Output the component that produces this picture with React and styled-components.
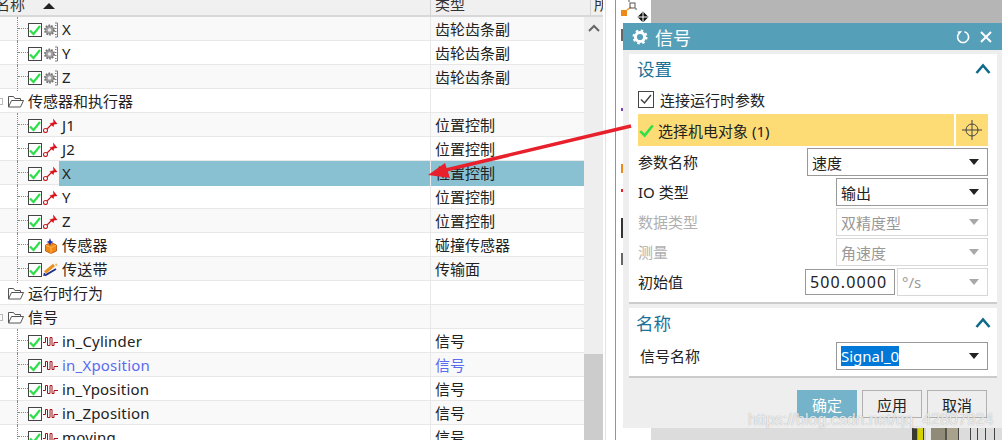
import styled, { createGlobalStyle } from "styled-components";

const GlobalStyle = createGlobalStyle`
  html, body {
    margin: 0;
    padding: 0;
    background: #fff;
  }
  body {
    font-family: "Noto Sans", "Noto Sans CJK SC", sans-serif;
    font-size: 15px;
    color: #222;
  }
`;

const rows = [
  { name: "X", type: "齿轮齿条副", icon: "gear" },
  { name: "Y", type: "齿轮齿条副", icon: "gear" },
  { name: "Z", type: "齿轮齿条副", icon: "gear" },
  { name: "传感器和执行器", folder: true },
  { name: "J1", type: "位置控制", icon: "joint" },
  { name: "J2", type: "位置控制", icon: "joint" },
  { name: "X", type: "位置控制", icon: "joint", selected: true },
  { name: "Y", type: "位置控制", icon: "joint" },
  { name: "Z", type: "位置控制", icon: "joint" },
  { name: "传感器", type: "碰撞传感器", icon: "sensor" },
  { name: "传送带", type: "传输面", icon: "belt" },
  { name: "运行时行为", folder: true, noBox: true },
  { name: "信号", folder: true },
  { name: "in_Cylinder", type: "信号", icon: "signal" },
  { name: "in_Xposition", type: "信号", icon: "signal", link: true },
  { name: "in_Yposition", type: "信号", icon: "signal" },
  { name: "in_Zposition", type: "信号", icon: "signal" },
  { name: "moving", type: "信号", icon: "signal" },
];

const machineParts = [
  [5, "#3a3a30"], [1, "#9a9a90"], [5, "#d6d200"], [1, "#3a3a30"], [2, "#cfcfcf"],
  [5, "#e8e8e8"], [14, "#8f8b78"], [2, "#55554a"], [11, "#a8a28c"], [1, "#444"],
  [11, "#dcdcdc"], [1, "#444"], [6, "#dcdcdc"], [1, "#444"], [7, "#dcdcdc"],
  [1, "#444"], [8, "#dcdcdc"], [1, "#444"],
];

function GearIcon() {
  return (
    <svg width="14" height="16" viewBox="0 0 14 16">
      <circle cx="5.500" cy="8" r="4.500" fill="#a0a0a0" stroke="#767676" strokeWidth="2" strokeDasharray="1.600 1.200" />
      <circle cx="5.500" cy="8" r="1.800" fill="#ececec" />
      <path d="M11 1H13.500V15H11M11 3.500h1.500M11 6.500h1.500M11 9.500h1.500M11 12.500h1.500" fill="none" stroke="#7a7a7a" strokeWidth="1" />
    </svg>
  );
}

function JointIcon() {
  return (
    <svg width="15" height="15" viewBox="0 0 15 15">
      <circle cx="2.500" cy="12.500" r="2" fill="#fff" stroke="#c8141c" strokeWidth="1.100" />
      <path d="M4 11L10 5" stroke="#c8141c" strokeWidth="1.100" />
      <path d="M6.500 5.500L10.500 4.500L10 0.500L14.500 6L11 6.500L10.500 9Z" fill="#d8141c" />
    </svg>
  );
}

function SensorIcon() {
  return (
    <svg width="14" height="16" viewBox="0 0 14 16">
      <path d="M1.500 7L7 4.500L12.500 7V13L7 15.500L1.500 13Z" fill="#f08a14" stroke="#b9480c" strokeWidth="0.800" />
      <path d="M1.500 7L7 9.500L12.500 7M7 9.500V15.500" fill="none" stroke="#ffc060" strokeWidth="0.800" />
      <path d="M6 0L7 3L9.500 4L7 5L6 8L5 5L2.500 4L5 3Z" fill="#1a2fa8" />
    </svg>
  );
}

function BeltIcon() {
  return (
    <svg width="15" height="15" viewBox="0 0 15 15">
      <path d="M2 10.500L11 3" stroke="#e89020" strokeWidth="3" />
      <path d="M12.500 2L14 3.500" stroke="#f2b860" strokeWidth="2" />
      <path d="M2 13.500L13 7" stroke="#23308c" strokeWidth="2" />
      <path d="M1.500 11L1 14" stroke="#23308c" strokeWidth="1.500" />
    </svg>
  );
}

function SignalIcon() {
  return (
    <svg width="15" height="13" viewBox="0 0 15 13">
      <path d="M0 7.500H2.500V2.500H4.500V10.500H7V2.500H9V10.500H11V7.500H15" fill="none" stroke="#a80f14" strokeWidth="1" />
    </svg>
  );
}

const rowIcons = {
  gear: GearIcon,
  joint: JointIcon,
  sensor: SensorIcon,
  belt: BeltIcon,
  signal: SignalIcon,
};

function FolderIcon() {
  return (
    <svg width="16" height="13" viewBox="0 0 16 13">
      <path d="M0.500 12V1.500H5.500L7 3.500H12.500V5.500M0.500 12H12.500L15.500 5.500H3.500L0.500 12Z" fill="#fff" stroke="#555" strokeWidth="1" />
    </svg>
  );
}

function Tick({ size = 12, color = "#2fe04a", weight = 2.200 }) {
  return (
    <svg width={size} height={size} viewBox="0 0 12 12">
      <path d="M1 6.500L4.500 10L11 2" fill="none" stroke={color} strokeWidth={weight} />
    </svg>
  );
}

function Chevron() {
  return (
    <svg width="16" height="11" viewBox="0 0 16 11">
      <path d="M1.500 10L8 2.500L14.500 10" fill="none" stroke="#0f6a8a" strokeWidth="2.600" />
    </svg>
  );
}

function TreeRow({ row }) {
  const Icon = rowIcons[row.icon];
  return (
    <Row>
      <NameCell>
        {row.folder ? (
          <>
            <Expander $plain={row.noBox} />
            <FolderSlot>
              <FolderIcon />
            </FolderSlot>
          </>
        ) : (
          <>
            <Guide />
            <CheckBox>
              <Tick />
            </CheckBox>
            <IconSlot>
              <Icon />
            </IconSlot>
          </>
        )}
        <Label $selected={row.selected} $link={row.link} $folder={row.folder}>
          {row.name}
        </Label>
      </NameCell>
      <TypeCell $selected={row.selected} $link={row.link}>
        {row.type}
      </TypeCell>
    </Row>
  );
}

function Select({ value, width, disabled, selected }) {
  return (
    <SelectBox $width={width} $disabled={disabled}>
      {selected ? <Highlighted>{value}</Highlighted> : <span>{value}</span>}
      <Caret $disabled={disabled} />
    </SelectBox>
  );
}

export default function App() {
  return (
    <Page>
      <GlobalStyle />
      <TreePanel>
        <HeaderRow>
          <HeaderName>
            <span>名称</span>
            <SortMark />
          </HeaderName>
          <HeaderType>类型</HeaderType>
          <HeaderExtra>所</HeaderExtra>
        </HeaderRow>
        <TreeBody>
          <TreeRows>
            {rows.map((row, i) => (
              <TreeRow key={i} row={row} />
            ))}
          </TreeRows>
          <ScrollBar>
            <ScrollUp>
              <svg width="12" height="8" viewBox="0 0 12 8">
                <path d="M1 7L6 2L11 7" fill="none" stroke="#666" strokeWidth="2" />
              </svg>
            </ScrollUp>
            <ScrollThumb />
          </ScrollBar>
        </TreeBody>
      </TreePanel>

      <Splitter />

      <Viewport>
        <Palette>
          <PaletteIcon>
            <svg width="30" height="22" viewBox="0 0 30 22">
              <rect x="0" y="10" width="6" height="6" fill="#ee8a1a" />
              <path d="M6 10L10 7" stroke="#ee8a1a" strokeWidth="1.200" />
              <rect x="9" y="3" width="5" height="5" fill="none" stroke="#555" strokeWidth="1" />
              <path d="M7 1h2M15 8v2" stroke="#555" strokeWidth="1" />
              <path d="M16.500 17L22 11.500L27.500 17L22 22.500Z" fill="#111" />
              <path d="M22 12V22M17 17H27" stroke="#fff" strokeWidth="1" />
            </svg>
          </PaletteIcon>
          <PaletteMark $top={5} $h={12} $c="#666" />
          <PaletteMark $top={67} $h={3} $c="#7a3fb0" />
          <PaletteMark $top={53} $h={9} $c="#ee8a1a" />
          <PaletteMark $top={16} $h={3} $c="#e8202c" />
          <PaletteMark $top={26} $h={20} $c="#333" />
          <PaletteMark $top={15} $h={12} $c="#666" />
        </Palette>
        <Scene>
          <SceneTop />
          <SceneBottom>
            <Machine>
              {machineParts.map(([w, c], i) => (
                <MachinePart key={i} $w={w} $c={c} />
              ))}
            </Machine>
          </SceneBottom>
        </Scene>
      </Viewport>

      <Dialog>
        <TitleBar>
          <TitleLeft>
            <svg width="16" height="16" viewBox="0 0 16 16">
              <circle cx="8" cy="8" r="4.600" fill="none" stroke="#fff" strokeWidth="3" />
              <circle cx="8" cy="8" r="6.500" fill="none" stroke="#fff" strokeWidth="2" strokeDasharray="2.500 2.600" />
            </svg>
            <TitleText>信号</TitleText>
          </TitleLeft>
          <TitleActions>
            <svg width="14" height="14" viewBox="0 0 14 14">
              <path d="M8.500 1.700A5.500 5.500 0 1 1 2.500 4" fill="none" stroke="#fff" strokeWidth="1.600" />
              <path d="M1.500 1.500L6 1L3 5Z" fill="#fff" />
            </svg>
            <svg width="14" height="14" viewBox="0 0 14 14">
              <path d="M2 2L12 12M12 2L2 12" fill="none" stroke="#fff" strokeWidth="2" />
            </svg>
          </TitleActions>
        </TitleBar>

        <DialogBody>
          <Section $height={250}>
            <SectionHead>
              <SectionTitle>设置</SectionTitle>
              <Chevron />
            </SectionHead>
            <CheckLine>
              <RuntimeCheck>
                <Tick size={12} color="#444" weight={1.500} />
              </RuntimeCheck>
              连接运行时参数
            </CheckLine>
            <PickLine>
              <PickMain>
                <Tick size={15} />
                选择机电对象 (1)
              </PickMain>
              <PickButton>
                <svg width="22" height="22" viewBox="0 0 22 22">
                  <circle cx="11" cy="11" r="6" fill="none" stroke="#444" strokeWidth="1" />
                  <path d="M11 1V21M1 11H21" stroke="#444" strokeWidth="1" />
                </svg>
              </PickButton>
            </PickLine>
            <FormRow>
              <FieldLabel>参数名称</FieldLabel>
              <Select value="速度" width={181} />
            </FormRow>
            <FormRow>
              <FieldLabel>IO 类型</FieldLabel>
              <Select value="输出" width={152} />
            </FormRow>
            <FormRow>
              <FieldLabel $disabled>数据类型</FieldLabel>
              <Select value="双精度型" width={152} disabled />
            </FormRow>
            <FormRow>
              <FieldLabel $disabled>测量</FieldLabel>
              <Select value="角速度" width={152} disabled />
            </FormRow>
            <FormRow>
              <FieldLabel>初始值</FieldLabel>
              <ValueGroup>
                <NumberBox>500.0000</NumberBox>
                <Select value="°/s" width={91} disabled />
              </ValueGroup>
            </FormRow>
          </Section>

          <Section $height={70}>
            <SectionHead $name>
              <SectionTitle>名称</SectionTitle>
              <Chevron />
            </SectionHead>
            <NameLine>
              <FieldLabel>信号名称</FieldLabel>
              <Select value="Signal_0" width={152} selected />
            </NameLine>
          </Section>

          <ButtonBar>
            <DialogButton $primary>确定</DialogButton>
            <DialogButton>应用</DialogButton>
            <DialogButton>取消</DialogButton>
          </ButtonBar>
        </DialogBody>
      </Dialog>

      <Watermark>https://blog.csdn.net/qq_42807924</Watermark>

      <ArrowLayer width="1002" height="440" viewBox="0 0 1002 440">
        <path d="M631 126L446 170" stroke="#e8202c" strokeWidth="3.600" />
        <path d="M428 175L445 163L450 178Z" fill="#e8202c" />
      </ArrowLayer>
    </Page>
  );
}

const Page = styled.div`
  position: relative;
  display: flex;
  width: 1002px;
  height: 440px;
  overflow: hidden;
`;

const TreePanel = styled.div`
  display: flex;
  flex-direction: column;
  width: 603px;
  flex: none;
`;

const HeaderRow = styled.div`
  display: grid;
  grid-template-columns: 430px 160px 13px;
  height: 17px;
  flex: none;
  background: #f0f0f0;
  border-bottom: 2px solid #d8d8d8;
  box-sizing: border-box;
  overflow: hidden;
  line-height: 20px;
`;

const HeaderName = styled.div`
  display: flex;
  margin: -6px 0 0 -5px;
  gap: 18px;
  color: #333;
`;

const SortMark = styled.i`
  width: 0;
  height: 0;
  margin-top: 9px;
  border-left: 6px solid transparent;
  border-right: 6px solid transparent;
  border-bottom: 6px solid #222;
`;

const HeaderType = styled.div`
  margin-top: -6px;
  padding-left: 4px;
  border-left: 1px solid #d4d4d4;
  color: #333;
  height: 30px;
`;

const HeaderExtra = styled(HeaderType)`
  padding-left: 3px;
  overflow: hidden;
`;

const TreeBody = styled.div`
  display: flex;
  flex: 1;
  min-height: 0;
`;

const TreeRows = styled.div`
  width: 584px;
  flex: none;

  & > div:nth-child(odd) {
    background: #f9f9f9;
  }
`;

const Row = styled.div`
  display: grid;
  grid-template-columns: 430px 154px;
  height: 24px;
  box-sizing: border-box;
  border-bottom: 1px solid #e8e8e8;
  line-height: 25px;
`;

const NameCell = styled.div`
  display: flex;
  align-items: center;
  min-width: 0;
`;

const TypeCell = styled.div`
  padding-left: 4px;
  border-left: 1px solid #e8e8e8;
  background: ${(p) => (p.$selected ? "#8ac1d2" : "transparent")};
  color: ${(p) => (p.$link ? "#5a6cf0" : "#222")};
`;

const Guide = styled.span`
  position: relative;
  align-self: stretch;
  width: 10px;
  margin: 0 0 -1px 17px;
  border-left: 1px dotted #888;

  &::after {
    content: "";
    position: absolute;
    left: 0;
    right: 0;
    top: 11px;
    border-top: 1px dotted #888;
  }
`;

const CheckBox = styled.span`
  display: flex;
  align-items: center;
  justify-content: center;
  width: 14px;
  height: 14px;
  flex: none;
  box-sizing: border-box;
  border: 1px solid #444;
  background: #fff;
`;

const IconSlot = styled.span`
  display: flex;
  align-items: center;
  justify-content: center;
  width: 15px;
  margin-left: 1px;
  flex: none;
`;

const Expander = styled.span`
  width: 3px;
  height: ${(p) => (p.$plain ? "0" : "7px")};
  flex: none;
  box-sizing: border-box;
  border: 1px solid ${(p) => (p.$plain ? "transparent" : "#bbb")};
  border-left: 0;
`;

const FolderSlot = styled.span`
  display: flex;
  margin-left: 5px;
  width: 17px;
  flex: none;
`;

const Label = styled.span`
  flex: 1;
  align-self: stretch;
  margin-left: ${(p) => (p.$folder ? "3px" : "1px")};
  padding-left: ${(p) => (p.$folder ? "0" : "3px")};
  background: ${(p) => (p.$selected ? "#8ac1d2" : "transparent")};
  color: ${(p) => (p.$link ? "#5a6cf0" : "#222")};
  letter-spacing: ${(p) => (p.$folder ? "0" : "0.2px")};
  white-space: nowrap;
`;

const ScrollBar = styled.div`
  width: 19px;
  flex: none;
  display: flex;
  flex-direction: column;
  justify-content: space-between;
  background: #eeeeee;
`;

const ScrollUp = styled.div`
  display: flex;
  justify-content: center;
  padding-top: 7px;
`;

const ScrollThumb = styled.div`
  height: 86px;
  background: #cccccc;
`;

const Splitter = styled.div`
  width: 13px;
  flex: none;
  box-sizing: border-box;
  background: #fff;
  border-left: 2px solid #fff;
  border-right: 1px solid #8f9696;
  position: relative;

  &::before {
    content: "";
    position: absolute;
    left: 0;
    top: 0;
    bottom: 0;
    width: 1px;
    background: #e2e2e2;
  }
`;

const Viewport = styled.div`
  display: flex;
  flex: 1;
  min-width: 0;
`;

const Palette = styled.div`
  width: 35px;
  flex: none;
  background: #fff;
`;

const PaletteIcon = styled.div`
  display: flex;
  height: 24px;
  padding-left: 5px;
`;

const PaletteMark = styled.div`
  width: 2px;
  height: ${(p) => p.$h}px;
  margin: ${(p) => p.$top}px 0 0 5px;
  background: ${(p) => p.$c};
`;

const Scene = styled.div`
  display: flex;
  flex-direction: column;
  justify-content: space-between;
  flex: 1;
`;

const SceneTop = styled.div`
  height: 23px;
  background: #b5b5b5;
`;

const SceneBottom = styled.div`
  display: flex;
  justify-content: flex-end;
  height: 12px;
  padding-right: 7px;
  background: #dcdcdc;
`;

const Machine = styled.div`
  display: flex;
`;

const MachinePart = styled.span`
  width: ${(p) => p.$w}px;
  background: ${(p) => p.$c};
`;

const Dialog = styled.section`
  position: absolute;
  left: 623px;
  top: 23px;
  width: 379px;
  height: 405px;
  display: flex;
  flex-direction: column;
  background: #eeeeee;
`;

const TitleBar = styled.header`
  display: flex;
  align-items: center;
  justify-content: space-between;
  height: 27px;
  flex: none;
  padding: 0 9px;
  background: #569fb9;
  color: #fff;
`;

const TitleLeft = styled.div`
  display: flex;
  align-items: center;
  gap: 7px;
`;

const TitleText = styled.span`
  font-size: 18px;
`;

const TitleActions = styled.div`
  display: flex;
  align-items: center;
  gap: 9px;
`;

const DialogBody = styled.div`
  display: flex;
  flex-direction: column;
  gap: 4px;
  padding: 4px 5px 0 6px;
`;

const Section = styled.div`
  height: ${(p) => p.$height}px;
  box-sizing: border-box;
  background: #fff;
  border-bottom: 2px solid #cccccc;
  padding: 0 9px;
`;

const SectionHead = styled.div`
  display: flex;
  align-items: center;
  justify-content: space-between;
  height: 30px;
  box-sizing: border-box;
  padding-bottom: 1px;
  margin: ${(p) => (p.$name ? "0 -3px 0 -2px" : "0 -3px 0 -1px")};
`;

const SectionTitle = styled.h2`
  margin: 0;
  font-size: 17.500px;
  line-height: 24px;
  font-weight: 400;
  color: #1d7196;
`;

const CheckLine = styled.label`
  display: flex;
  align-items: center;
  gap: 6px;
  height: 30px;
`;

const RuntimeCheck = styled.span`
  display: flex;
  align-items: center;
  justify-content: center;
  width: 16px;
  height: 17px;
  box-sizing: border-box;
  border: 1px solid #444;
`;

const PickLine = styled.div`
  display: flex;
  gap: 2px;
  height: 32px;
  margin-bottom: 2px;
`;

const PickMain = styled.div`
  flex: 1;
  display: flex;
  align-items: center;
  gap: 4px;
  padding-left: 1px;
  background: #fddc75;
`;

const PickButton = styled.div`
  display: flex;
  align-items: center;
  justify-content: center;
  width: 32px;
  background: #fddc75;
`;

const FormRow = styled.div`
  display: flex;
  align-items: flex-start;
  justify-content: space-between;
  height: 30px;
`;

const NameLine = styled(FormRow)`
  padding-left: 2px;
  height: 28px;
  margin-top: 4px;
`;

const FieldLabel = styled.span`
  line-height: 28px;
  color: ${(p) => (p.$disabled ? "#b0b0b0" : "#222")};
`;

const SelectBox = styled.div`
  display: flex;
  align-items: center;
  justify-content: space-between;
  width: ${(p) => p.$width}px;
  height: 28px;
  box-sizing: border-box;
  padding: 0 8px 0 4px;
  background: #fff;
  border: 1px solid ${(p) => (p.$disabled ? "#d8d8d8" : "#999")};
  color: ${(p) => (p.$disabled ? "#999" : "#222")};
`;

const Highlighted = styled.span`
  background: #0078d7;
  color: #fff;
  font-size: 15px;
  line-height: 20px;
`;

const Caret = styled.i`
  width: 0;
  height: 0;
  border-left: 5px solid transparent;
  border-right: 5px solid transparent;
  border-top: 6px solid ${(p) => (p.$disabled ? "#a8a8a8" : "#222")};
`;

const ValueGroup = styled.div`
  display: flex;
  align-items: center;
  gap: 2px;
`;

const NumberBox = styled.div`
  width: 90px;
  height: 26px;
  box-sizing: border-box;
  border: 1px solid #999;
  padding-left: 4px;
  font-size: 16px;
  line-height: 24px;
  letter-spacing: 1.100px;
  white-space: nowrap;
  overflow: hidden;
`;

const ButtonBar = styled.div`
  display: flex;
  justify-content: flex-end;
  gap: 5px;
  margin-top: 8px;
  padding-right: 10px;
`;

const DialogButton = styled.button`
  width: 60px;
  height: 28px;
  padding: 0;
  font: inherit;
  box-sizing: border-box;
  background: ${(p) => (p.$primary ? "#74b3c9" : "#eeeeee")};
  color: ${(p) => (p.$primary ? "#fff" : "#222")};
  border: ${(p) => (p.$primary ? "0" : "1px solid #b0b0b0")};
`;

const Watermark = styled.span`
  position: absolute;
  left: 748px;
  top: 411px;
  font-family: "Liberation Sans", sans-serif;
  font-size: 16px;
  color: rgba(255, 255, 255, 0.78);
  text-shadow: 0 0 1px rgba(120, 120, 120, 0.7);
  white-space: nowrap;
`;

const ArrowLayer = styled.svg`
  position: absolute;
  left: 0;
  top: 0;
  pointer-events: none;
`;
